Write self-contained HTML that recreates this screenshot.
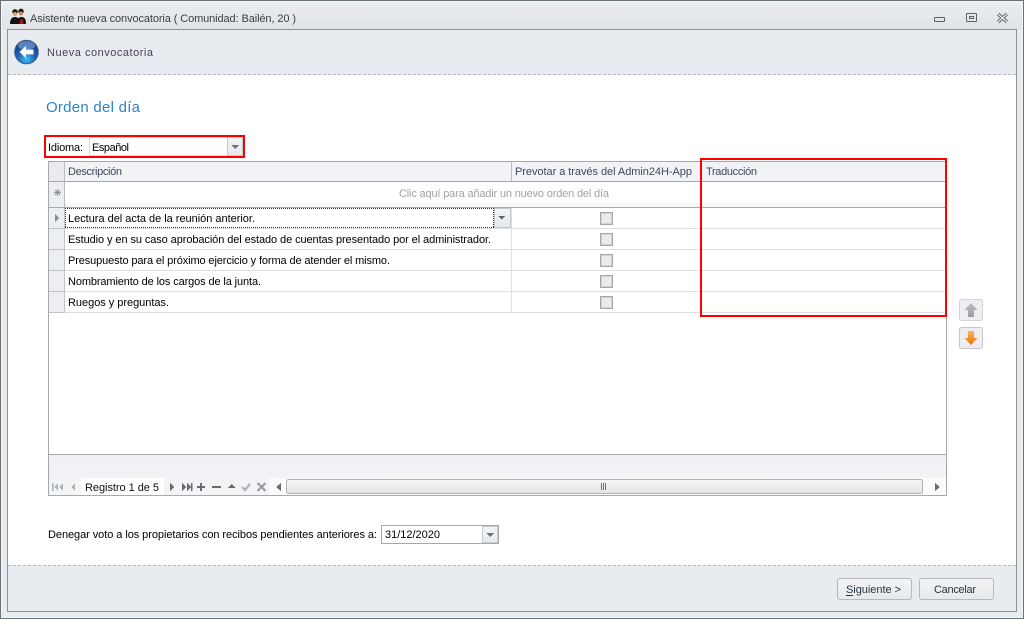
<!DOCTYPE html>
<html><head><meta charset="utf-8"><style>
html,body{margin:0;padding:0;width:1024px;height:619px;overflow:hidden;background:#fff}
svg{display:block}
text{font-family:"Liberation Sans",sans-serif;font-size:11px;fill:#000}
.h{fill:#3d4a5c}
</style></head><body>
<svg width="1024" height="619" viewBox="0 0 1024 619" xmlns="http://www.w3.org/2000/svg" shape-rendering="crispEdges">
<defs>
<linearGradient id="tb" x1="0" y1="0" x2="0" y2="1"><stop offset="0" stop-color="#eceef1"/><stop offset="1" stop-color="#e0e3e5"/></linearGradient>
<linearGradient id="btn" x1="0" y1="0" x2="0" y2="1"><stop offset="0" stop-color="#f3f4f6"/><stop offset="1" stop-color="#e6e9ec"/></linearGradient>
<linearGradient id="nav" x1="0" y1="0" x2="0" y2="1"><stop offset="0" stop-color="#eef0f3"/><stop offset="1" stop-color="#f4f5f7"/></linearGradient>
<linearGradient id="sb" x1="0" y1="0" x2="0" y2="1"><stop offset="0" stop-color="#f5f6f7"/><stop offset="1" stop-color="#e3e5e7"/></linearGradient>
<radialGradient id="ball" cx="0.5" cy="0.8" r="0.7"><stop offset="0" stop-color="#3fc0ee"/><stop offset="0.55" stop-color="#1c5fb4"/><stop offset="1" stop-color="#1a3f86"/></radialGradient>
<linearGradient id="org" x1="0" y1="0" x2="0" y2="1"><stop offset="0" stop-color="#fbb45c"/><stop offset="1" stop-color="#e87204"/></linearGradient>
<linearGradient id="gry" x1="0" y1="0" x2="0" y2="1"><stop offset="0" stop-color="#bcbec0"/><stop offset="1" stop-color="#9c9ea0"/></linearGradient>
</defs>

<!-- window -->
<rect x="0" y="0" width="1024" height="619" fill="#e8ebee"/>
<rect x="0" y="0" width="1024" height="30" fill="url(#tb)"/>
<rect x="0.5" y="0.5" width="1023" height="618" fill="none" stroke="#6a7277"/>
<rect x="1.5" y="1.5" width="1021" height="616" fill="none" stroke="#f4f5f6"/>
<rect x="7.5" y="29.5" width="1009" height="582" fill="#e8ebef" stroke="#8a9196"/>
<rect x="8" y="75" width="1008" height="490" fill="#fff"/>
<line x1="8" x2="1016" y1="74.5" y2="74.5" stroke="#b8bcc1" stroke-dasharray="3 2"/>
<line x1="8" x2="1016" y1="565.5" y2="565.5" stroke="#b8bcc1" stroke-dasharray="3 2"/>

<!-- title icon: two people -->
<g shape-rendering="geometricPrecision">
<path d="M10 24c0-5 2-7 5-7s5 2 5 7z" fill="#111"/>
<path d="M17 24c0-5 1.500-7 4.500-7s4.500 2 4.500 7z" fill="#1c0c0e"/>
<path d="M19.500 24c0-3 .8-5 2-5s2 2 2 5z" fill="#9c1a1e"/>
<circle cx="15" cy="11.800" r="2.700" fill="#1e140e"/><circle cx="21" cy="11.300" r="2.700" fill="#1e140e"/>
<circle cx="15" cy="14" r="2" fill="#d7a47e"/><circle cx="21" cy="13.500" r="2" fill="#c28d68"/>
</g>
<text x="30" y="22" textLength="266" lengthAdjust="spacing" style="fill:#3a3f45">Asistente nueva convocatoria ( Comunidad: Bailén, 20 )</text>

<!-- window controls -->
<g fill="none" stroke="#5c6268">
<rect x="934.500" y="17.500" width="10" height="4" rx="1"/>
<rect x="966.500" y="13.500" width="10" height="8" rx="1"/><rect x="969.500" y="16.500" width="4" height="2"/>
</g>
<g shape-rendering="geometricPrecision" fill="none">
<path d="M998 14l9 8M1007 14l-9 8" stroke="#5c6268" stroke-width="3.200"/>
<path d="M998 14l9 8M1007 14l-9 8" stroke="#e6e8ea" stroke-width="1.400"/>
</g>

<!-- back button -->
<g shape-rendering="geometricPrecision">
<circle cx="26.500" cy="52" r="11.800" fill="url(#ball)" stroke="#3b5f94"/>
<ellipse cx="26.500" cy="45.500" rx="8.500" ry="4.500" fill="#8fb4e0" opacity=".55"/>
<path d="M19.500 52l6.500-6v3.600h7.500v4.800H26v3.600z" fill="#fff"/>
</g>
<text x="47" y="56" textLength="106" lengthAdjust="spacing" style="fill:#4a3f55">Nueva convocatoria</text>

<text x="46" y="112" textLength="94" lengthAdjust="spacing" style="font-size:15px;fill:#2b86c9">Orden del día</text>

<!-- idioma -->
<text x="48" y="151" textLength="35" lengthAdjust="spacing">Idioma:</text>
<rect x="89.500" y="137.500" width="154" height="18" fill="#fff" stroke="#d5d8dc"/>
<rect x="227.500" y="137.500" width="15" height="18" fill="url(#btn)" stroke="#c4c8cc"/>
<path d="M231 145h8l-4 4z" fill="#6f757a"/>
<text x="92" y="151" textLength="37" lengthAdjust="spacing">Español</text>

<!-- grid -->
<rect x="48.500" y="161.500" width="898" height="334" fill="#fff" stroke="#a4a9ae"/>
<rect x="49" y="162" width="897" height="19" fill="#f1f3f6"/>
<rect x="49" y="162" width="15" height="19" fill="#e9ebef"/>
<line x1="49" x2="946" y1="181.500" y2="181.500" stroke="#a4a9ae"/>
<line x1="64.500" x2="64.500" y1="162" y2="181" stroke="#b9bdc2"/>
<line x1="511.500" x2="511.500" y1="162" y2="181" stroke="#b9bdc2"/>
<text x="68" y="175" textLength="54" lengthAdjust="spacing" class="h">Descripción</text>
<text x="515" y="175" textLength="177" lengthAdjust="spacing" class="h">Prevotar a través del Admin24H-App</text>
<text x="706" y="175" textLength="51" lengthAdjust="spacing" class="h">Traducción</text>

<!-- new row -->
<rect x="49" y="182" width="15" height="21" fill="#eceef1"/>
<line x1="64.500" x2="64.500" y1="182" y2="207" stroke="#b9bdc2"/>
<rect x="65" y="203" width="881" height="4" fill="#f4f6f8"/>
<rect x="49" y="203" width="15" height="4" fill="#eceef1"/>
<line x1="49" x2="946" y1="207.500" y2="207.500" stroke="#a4a9ae"/>
<path d="M54 192.500h7M57.500 189v7M55 190l5 5M60 190l-5 5" stroke="#8f959a" stroke-width=".9" shape-rendering="geometricPrecision"/>
<text x="399" y="197" textLength="210" lengthAdjust="spacing" style="fill:#a2a2a2">Clic aquí para añadir un nuevo orden del día</text>

<!-- rows -->
<rect x="49" y="208" width="15" height="105" fill="#eceef1"/>
<g stroke="#dcdfe3">
<line x1="65" x2="946" y1="228.500" y2="228.500"/><line x1="65" x2="946" y1="249.500" y2="249.500"/><line x1="65" x2="946" y1="270.500" y2="270.500"/><line x1="65" x2="946" y1="291.500" y2="291.500"/><line x1="65" x2="946" y1="312.500" y2="312.500"/>
<line x1="511.500" x2="511.500" y1="208" y2="312"/>
</g>
<g stroke="#c0c4c8">
<line x1="49" x2="64" y1="228.500" y2="228.500"/><line x1="49" x2="64" y1="249.500" y2="249.500"/><line x1="49" x2="64" y1="270.500" y2="270.500"/><line x1="49" x2="64" y1="291.500" y2="291.500"/><line x1="49" x2="64" y1="312.500" y2="312.500"/>
<line x1="64.500" x2="64.500" y1="208" y2="313"/>
</g>
<path d="M55 214l4 4-4 4z" fill="#8b9095"/>
<rect x="65" y="208" width="429" height="20" fill="#fff"/>
<path d="M65 208.500h429M65 227.500h429M65.500 208v20M493.500 208v20" fill="none" stroke="#333" stroke-dasharray="1 1"/>
<rect x="494.500" y="208.500" width="16" height="19" fill="url(#btn)" stroke="#c4c8cc"/>
<path d="M498 216h7l-3.500 3.500z" fill="#5c6268"/>
<text x="68" y="222" textLength="187" lengthAdjust="spacing">Lectura del acta de la reunión anterior.</text>
<text x="68" y="243" textLength="423" lengthAdjust="spacing">Estudio y en su caso aprobación del estado de cuentas presentado por el administrador.</text>
<text x="68" y="264" textLength="322" lengthAdjust="spacing">Presupuesto para el próximo ejercicio y forma de atender el mismo.</text>
<text x="68" y="285" textLength="193" lengthAdjust="spacing">Nombramiento de los cargos de la junta.</text>
<text x="68" y="306" textLength="101" lengthAdjust="spacing">Ruegos y preguntas.</text>

<!-- checkboxes -->
<g fill="#e9ebed" stroke="#a3a7ab" stroke-width="1">
<rect x="600.500" y="212.500" width="12" height="12"/>
<rect x="600.500" y="233.500" width="12" height="12"/>
<rect x="600.500" y="254.500" width="12" height="12"/>
<rect x="600.500" y="275.500" width="12" height="12"/>
<rect x="600.500" y="296.500" width="12" height="12"/>
</g>
<g fill="none" stroke="#d0d3d6">
<rect x="601.500" y="213.500" width="10" height="10"/>
<rect x="601.500" y="234.500" width="10" height="10"/>
<rect x="601.500" y="255.500" width="10" height="10"/>
<rect x="601.500" y="276.500" width="10" height="10"/>
<rect x="601.500" y="297.500" width="10" height="10"/>
</g>

<!-- navigator -->
<line x1="49" x2="946" y1="454.500" y2="454.500" stroke="#a4a9ae"/>
<rect x="49" y="455" width="897" height="40" fill="url(#nav)"/>
<rect x="81" y="478" width="83" height="17" fill="#fff"/>
<rect x="269" y="478" width="677" height="17" fill="#fbfbfc"/>
<text x="85" y="491" textLength="74" lengthAdjust="spacing" style="fill:#111">Registro 1 de 5</text>
<g fill="#aeb2b6">
<path d="M52 483h1.500v8H52zM58 483v8l-4-4zM63 483v8l-4-4z"/>
<path d="M75 483v8l-4-4z"/>
</g>
<g fill="#676c71">
<path d="M170 483l4 4-4 4zM182 483l4 4-4 4zM187 483l4 4-4 4zM191 483h1.500v8H191z"/>
<path d="M197 486h3v-3h2v3h3v2h-3v3h-2v-3h-3z"/>
<path d="M212 486h9v2h-9z"/>
<path d="M231.500 484l4 4h-8z"/>
<path d="M281 483v8l-5-4z"/>
<path d="M935 483l5 4-5 4z"/>
</g>
<path d="M242 487l3 3 5-6" fill="none" stroke="#aeb2b6" stroke-width="2.200" shape-rendering="geometricPrecision"/>
<path d="M257.500 483l8 8M265.500 483l-8 8" fill="none" stroke="#989da1" stroke-width="2.200" shape-rendering="geometricPrecision"/>
<rect x="286.500" y="479.500" width="636" height="14" rx="2" fill="url(#sb)" stroke="#aeb2b6"/>
<g stroke="#6d7276"><line x1="601.500" x2="601.500" y1="483" y2="490"/><line x1="603.500" x2="603.500" y1="483" y2="490"/><line x1="605.500" x2="605.500" y1="483" y2="490"/></g>

<!-- red highlights -->
<rect x="45" y="136" width="199" height="21" fill="none" stroke="#f00" stroke-width="2"/>
<rect x="701" y="159" width="245" height="157" fill="none" stroke="#f00" stroke-width="2"/>

<!-- up/down buttons -->
<g shape-rendering="geometricPrecision">
<rect x="959.500" y="299.500" width="23" height="21" rx="2" fill="#eceef1" stroke="#d2d5d9"/>
<path d="M971 303l6.500 7h-3.500v7h-6v-7h-3.500z" fill="url(#gry)"/>
<rect x="959.500" y="327.500" width="23" height="21" rx="2" fill="#eceef1" stroke="#c4c8cc"/>
<path d="M968 331h6v7h3.500l-6.500 7-6.500-7h3.500z" fill="url(#org)"/>
</g>

<!-- date row -->
<text x="48" y="538" textLength="329" lengthAdjust="spacing">Denegar voto a los propietarios con recibos pendientes anteriores a:</text>
<rect x="381.500" y="525.500" width="117" height="18" fill="#fff" stroke="#a4a9ae"/>
<rect x="482.500" y="526.500" width="15" height="16" fill="url(#btn)" stroke="#c8ccd0"/>
<path d="M486 533h8l-4 4z" fill="#6f757a"/>
<text x="385" y="538" textLength="55" lengthAdjust="spacing">31/12/2020</text>

<!-- footer buttons -->
<g shape-rendering="geometricPrecision">
<rect x="837.500" y="578.500" width="74" height="21" rx="2.500" fill="url(#btn)" stroke="#b5b9be"/>
<rect x="919.500" y="578.500" width="74" height="21" rx="2.500" fill="url(#btn)" stroke="#b5b9be"/>
</g>
<text x="846" y="593" textLength="55" lengthAdjust="spacing" style="fill:#2a3440">Siguiente &gt;</text>
<line x1="846" x2="853" y1="595.500" y2="595.500" stroke="#2a3440"/>
<text x="934" y="593" textLength="42" lengthAdjust="spacing" style="fill:#2a3440">Cancelar</text>
</svg>
</body></html>
